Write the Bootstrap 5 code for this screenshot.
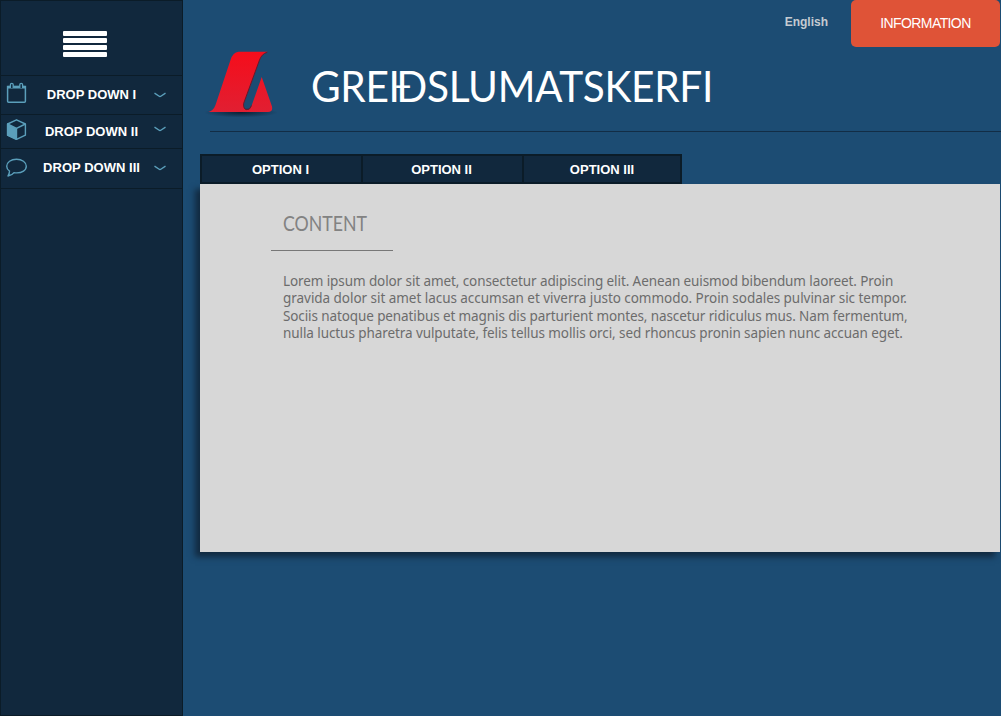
<!DOCTYPE html>
<html lang="is">
<head>
<meta charset="utf-8">
<meta name="viewport" content="width=device-width, initial-scale=1">
<title>Greiðslumatskerfi</title>
<link href="https://cdn.jsdelivr.net/npm/bootstrap@5.3.0/dist/css/bootstrap.min.css" rel="stylesheet">
<style>
body{background:#1c4c73;font-family:"Liberation Sans",Arial,sans-serif;font-size:13px;overflow:hidden}
.sidebar{width:183px;background:#11283d;border:1px solid #0b1c28}
.brand-toggle{height:75px;padding-top:30px;border-bottom:1px solid #0b1c28}
.bars{width:44px;gap:2px;margin-right:14px}
.bars span{height:5px;background:#fff;border-radius:1px}
.side-item{color:#fff;font-weight:700;border-bottom:1px solid #0b1c28;text-decoration:none;line-height:20px}
.side-item .ico{width:24px;height:24px;margin-left:4px}
.side-item .txt{width:125px;text-align:center;letter-spacing:.02px}
.side-item .chev{width:12px;height:6px}
.main-area{padding-left:17px}
.topbar{height:47px}
.lang{color:#c5cbd1;font-size:12px;font-weight:700;line-height:18px;margin:13px 23px 0 0}
.info-btn{width:149px;height:47px;background:#df5337;color:#fff;border:0;border-radius:5px;font-size:14px;letter-spacing:-.6px;line-height:20px;padding:0 0 1px;margin-right:1px}
.masthead{height:85px;margin-left:10px;border-bottom:1px solid #122d46}
.logo{width:80px;height:80px;margin-left:-5px}
.site-title{font-family:Lato,sans-serif;font-size:42px;font-weight:400;line-height:50px;color:#fff;margin:14px 0 0 26px;white-space:nowrap;letter-spacing:-.35px;transform:scaleX(.967);transform-origin:0 0}
.site-title .tight{letter-spacing:-4px}
.tabs{margin-top:22px;width:482px;height:30px;background:#0b1c28;padding:2px;gap:2px}
.tabs a{width:159px;background:#11283d;color:#fff;font-weight:700;text-align:center;line-height:27px;padding:0 2px 0 0;border-radius:0}
.tabs a:last-child{width:156px;padding:0}
.panel{width:800px;height:368px;background:#d7d7d7;padding:26px 0 0 83px;box-shadow:-5px 5px 6px #122a40}
.panel h2{font-family:Lato,sans-serif;font-size:20.500px;font-weight:400;line-height:27px;color:#828282;margin:0;transform:scaleX(.865);transform-origin:0 0}
.rule{width:122px;height:1px;background:#777;margin:13px 0 0 -12px}
.copy{font-family:"Noto Sans",sans-serif;font-size:13.500px;line-height:17.330px;color:#6c6c6c;margin-top:22px;white-space:nowrap}
.copy span{display:block}
.copy span:nth-child(1){letter-spacing:-.095px}
.copy span:nth-child(2){letter-spacing:-.04px}
.copy span:nth-child(3){letter-spacing:-.105px}
.copy span:nth-child(4){letter-spacing:-.08px}
</style>
</head>
<body>
<div class="d-flex vh-100">
  <nav class="sidebar flex-shrink-0 d-flex flex-column">
    <div class="brand-toggle d-flex justify-content-center">
      <div class="bars d-flex flex-column ms-n1"><span></span><span></span><span></span><span></span></div>
    </div>
    <a href="#" class="side-item d-flex" style="height:39px">
      <svg class="ico" style="margin-top:5px" viewBox="0 0 24 24" fill="none" stroke="#5b9fbb"><path d="M2.600 5.500h17.800v14.800a1 1 0 0 1-1 1H3.600a1 1 0 0 1-1-1z" stroke-width="1.500"/><path d="M3 6.200h17" stroke-width="2.600"/><path d="M5.400 7V3.800a1.400 1.400 0 0 1 2.800 0V7M14.800 7V3.800a1.400 1.400 0 0 1 2.800 0V7" stroke-width="1.300" fill="#11283d"/></svg>
      <span class="txt" style="padding-top:9px">DROP DOWN I</span>
      <svg class="chev" style="margin-top:16px" viewBox="0 0 12 6" fill="none" stroke="#5b9fbb" stroke-width="1.400"><path d="M.5 1.200 4.800 4Q6 4.900 7.200 4L11.500 1.200"/></svg>
    </a>
    <a href="#" class="side-item d-flex" style="height:34px">
      <svg class="ico" style="margin-top:3px" viewBox="0 0 24 24" fill="none" stroke="#5b9fbb" stroke-width="1.400" stroke-linejoin="round"><path d="M11.500 1.800 20.400 6v11.200L11.500 21.400 2.600 17.200V6z"/><path d="M2.600 6 11.500 10.400v11L2.600 17.200z" fill="#5b9fbb"/><path d="M11.500 10.400 20.400 6"/></svg>
      <span class="txt" style="padding-top:7px">DROP DOWN II</span>
      <svg class="chev" style="margin-top:11px" viewBox="0 0 12 6" fill="none" stroke="#5b9fbb" stroke-width="1.400"><path d="M.5 1.200 4.800 4Q6 4.900 7.200 4L11.500 1.200"/></svg>
    </a>
    <a href="#" class="side-item d-flex" style="height:40px">
      <svg class="ico" style="margin-top:6px" viewBox="0 0 24 24" fill="none" stroke="#5b9fbb" stroke-width="1.400" stroke-linejoin="round"><path d="M11.500 4.200C17 4.200 21.300 7.200 21.300 11.300S17 17.900 11.800 17.900c-1 0-1.900-.1-2.800-.3C7.700 19.400 5.500 20.600 3 21c1-1.300 1.500-3.200 1.500-4.900C2.700 14.900 1.700 13.200 1.700 11.300 1.700 7.200 6 4.200 11.500 4.200z"/></svg>
      <span class="txt" style="padding-top:9px">DROP DOWN III</span>
      <svg class="chev" style="margin-top:16px" viewBox="0 0 12 6" fill="none" stroke="#5b9fbb" stroke-width="1.400"><path d="M.5 1.200 4.800 4Q6 4.900 7.200 4L11.500 1.200"/></svg>
    </a>
  </nav>
  <main class="main-area flex-grow-1">
    <div class="topbar d-flex justify-content-end">
      <span class="lang">English</span>
      <button class="btn info-btn">INFORMATION</button>
    </div>
    <header class="masthead d-flex">
      <svg class="logo" viewBox="205 47 80 80">
        <defs>
          <linearGradient id="red" x1="0" y1="0" x2="0" y2="1"><stop offset="0" stop-color="#f50d1b"/><stop offset="1" stop-color="#e11f32"/></linearGradient>
          <radialGradient id="shade"><stop offset="0" stop-color="#0a1c2e" stop-opacity=".9"/><stop offset="1" stop-color="#0a1c2e" stop-opacity="0"/></radialGradient>
        </defs>
        <ellipse cx="241" cy="112.500" rx="37" ry="5" fill="url(#shade)"/>
        <path d="M238.500 51.700H267.500Q262 53.500 259.500 60L243.500 104Q243.300 110 247 110Q250 110 251.500 106L261.700 77 272 106.500Q273 112 268 112H208.500Q213.500 110.500 215.500 105L230.500 60Q233 52 238.500 51.700z" fill="url(#red)"/>
        <path d="M267.300 52.300Q261.500 54 259.500 60L243.600 103.500Q243.200 109.700 247 109.700Q250 109.700 251.500 105.500" fill="none" stroke="#6b1829" stroke-width="1"/>
      </svg>
      <h1 class="site-title">GRE<span class="tight">I</span>ÐSLUMATSKERFI</h1>
    </header>
    <nav class="tabs nav flex-nowrap"><a class="nav-link" href="#">OPTION I</a><a class="nav-link" href="#">OPTION II</a><a class="nav-link" href="#">OPTION III</a></nav>
    <section class="panel">
      <h2>CONTENT</h2>
      <div class="rule"></div>
      <p class="copy mb-0"><span>Lorem ipsum dolor sit amet, consectetur adipiscing elit. Aenean euismod bibendum laoreet. Proin</span><span>gravida dolor sit amet lacus accumsan et viverra justo commodo. Proin sodales pulvinar sic tempor.</span><span>Sociis natoque penatibus et magnis dis parturient montes, nascetur ridiculus mus. Nam fermentum,</span><span>nulla luctus pharetra vulputate, felis tellus mollis orci, sed rhoncus pronin sapien nunc accuan eget.</span></p>
    </section>
  </main>
</div>
<script src="https://cdn.jsdelivr.net/npm/bootstrap@5.3.0/dist/js/bootstrap.bundle.min.js"></script>
</body>
</html>
